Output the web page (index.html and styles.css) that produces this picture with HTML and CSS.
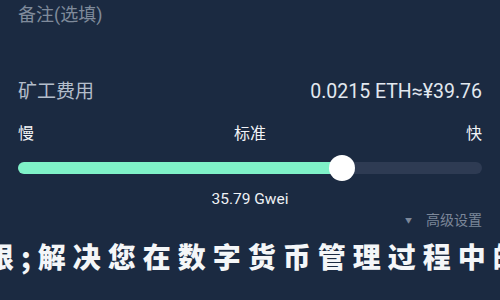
FILE: index.html
```html
<!DOCTYPE html>
<html lang="zh">
<head>
<meta charset="utf-8">
<link rel="stylesheet" href="styles.css">
</head>
<body>
<div class="page">
  <div class="remark">备注(选填)</div>
  <div class="fee-row">
    <span class="fee-label">矿工费用</span>
    <span class="fee-value">0.0215 ETH≈¥39.76</span>
  </div>
  <div class="speed-row">
    <span>慢</span>
    <span>标准</span>
    <span>快</span>
  </div>
  <div class="slider">
    <div class="track">
      <div class="fill" style="width:69.8%"></div>
      <div class="thumb" style="left:69.8%"></div>
    </div>
  </div>
  <div class="gwei">35.79 Gwei</div>
  <div class="advanced"><span class="caret">▼</span>高级设置</div>
  <div class="overlay">限;解决您在数字货币管理过程中的</div>
</div>
</body>
</html>
```
FILE: styles.css
```css
html, body {
  margin: 0;
  padding: 0;
  background: #1b2a41;
  width: 500px;
  height: 300px;
  overflow: hidden;
}
.page {
  position: relative;
  height: 300px;
  padding: 0 18px;
  font-family: "Roboto", "Noto Sans CJK SC", sans-serif;
  color: #dfe6ee;
}
.remark {
  padding-top: 4px;
  font-size: 18px;
  line-height: 22px;
  color: #7f8a9b;
}
.fee-row {
  margin-top: 54px;
  display: flex;
  justify-content: space-between;
  align-items: center;
  line-height: 24px;
}
.fee-label {
  font-size: 19px;
  color: #b3bdcb;
}
.fee-value {
  font-size: 19.5px;
  color: #e2e8ef;
}
.speed-row {
  margin-top: 20px;
  display: flex;
  justify-content: space-between;
  font-size: 16px;
  line-height: 20px;
  color: #f2f4f7;
}
.slider {
  margin-top: 11px;
  height: 26px;
  display: flex;
  align-items: center;
}
.track {
  position: relative;
  flex: 1;
  height: 12px;
  border-radius: 6px;
  background: #2e3b53;
}
.fill {
  height: 12px;
  border-radius: 6px;
  background: #7ff2c8;
}
.thumb {
  position: absolute;
  top: -7px;
  width: 26px;
  height: 26px;
  margin-left: -13px;
  border-radius: 50%;
  background: #ffffff;
}
.gwei {
  margin-top: 8px;
  text-align: center;
  font-size: 15.5px;
  line-height: 20px;
  color: #eef1f5;
}
.advanced {
  margin-top: 2px;
  text-align: right;
  font-size: 14px;
  line-height: 18px;
  color: #7c8799;
}
.caret {
  font-size: 7px;
  vertical-align: 2px;
  margin-right: 14px;
}
.overlay {
  position: absolute;
  top: 240px;
  left: -14px;
  white-space: nowrap;
  font-family: "Noto Sans CJK SC", sans-serif;
  font-weight: 900;
  font-size: 28px;
  line-height: 32px;
  letter-spacing: 7px;
  color: #f4f6f8;
}
```
